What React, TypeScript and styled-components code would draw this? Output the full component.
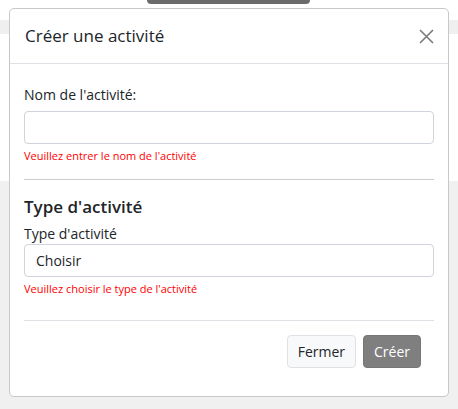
import styled, { createGlobalStyle } from 'styled-components';

const GlobalStyle = createGlobalStyle`
  html, body {
    margin: 0;
    padding: 0;
  }
  body {
    font-family: 'Open Sans', 'Noto Sans', sans-serif;
    color: #212529;
    background: #fff;
  }
  * {
    box-sizing: border-box;
  }
`;

const Page = styled.div`
  position: relative;
  width: 458px;
  height: 409px;
  overflow: hidden;
  display: flex;
  flex-direction: column;
`;

const TopStrip = styled.div`
  height: 20px;
  padding-left: 147px;
`;

const HiddenTab = styled.div`
  width: 163px;
  height: 4px;
  background: #6c6c6c;
  border-radius: 0 0 4px 4px;
`;

const Band = styled.div`
  height: 14px;
  background: #efefef;
`;

const WhiteArea = styled.div`
  height: 147px;
  background: #fff;
`;

const GreyArea = styled.div`
  flex: 1;
  background: #f0f0f0;
`;

const Modal = styled.div`
  position: absolute;
  left: 9px;
  top: 8px;
  width: 440px;
  background: #fff;
  border: 1px solid #c8c8c8;
  border-radius: 5px;
  display: flex;
  flex-direction: column;
`;

const Header = styled.div`
  display: flex;
  align-items: center;
  justify-content: space-between;
  padding: 14px 14px 14px 15px;
  border-bottom: 1px solid #dee2e6;
`;

const Title = styled.h5`
  margin: 0;
  font-size: 17px;
  font-weight: 500;
  line-height: 26px;
`;

const CloseButton = styled.button`
  display: flex;
  padding: 0;
  border: none;
  background: none;
  cursor: pointer;
`;

const Body = styled.div`
  padding: 20px 14px 0;
`;

const Label = styled.label<{ $gap?: number }>`
  display: block;
  font-size: 14px;
  line-height: 21px;
  margin-bottom: ${(p) => p.$gap ?? 6}px;
`;

const Field = styled.div`
  height: 33px;
  border: 1px solid #ced4da;
  border-radius: 4px;
  background: #fff;
  display: flex;
  align-items: center;
  padding: 0 11px;
  font-size: 14px;
`;

const ErrorText = styled.div`
  color: #ff0000;
  font-size: 11px;
  line-height: 16px;
  margin-top: 4px;
`;

const Divider = styled.hr`
  border: none;
  border-top: 1px solid #cccccc;
  margin: 15px 0 16px;
`;

const SectionTitle = styled.h5`
  margin: 0 0 5px;
  font-size: 17px;
  font-weight: 600;
  line-height: 22px;
`;

const Footer = styled.div`
  margin: 23px 14px 0;
  border-top: 1px solid #dee2e6;
  padding: 14px 13px 28px 0;
  display: flex;
  justify-content: flex-end;
  gap: 7px;
`;

const Button = styled.button<{ $primary?: boolean }>`
  height: 33px;
  padding: 0 10px;
  font-family: inherit;
  font-size: 14px;
  border-radius: 4px;
  border: 1px solid ${(p) => (p.$primary ? '#777777' : '#dee2e6')};
  background: ${(p) => (p.$primary ? '#7f7f7f' : '#f8f9fa')};
  color: ${(p) => (p.$primary ? '#fff' : '#212529')};
  cursor: pointer;
`;

export default function App() {
  return (
    <>
      <GlobalStyle />
      <Page>
        <TopStrip>
          <HiddenTab />
        </TopStrip>
        <Band />
        <WhiteArea />
        <GreyArea />
        <Modal>
          <Header>
            <Title>Créer une activité</Title>
            <CloseButton aria-label="Fermer">
              <svg width="15" height="15" viewBox="0 0 15 15">
                <path d="M1 1 L14 14 M14 1 L1 14" stroke="#7a7a7a" strokeWidth="1.6" fill="none" />
              </svg>
            </CloseButton>
          </Header>
          <Body>
            <Label>Nom de l'activité:</Label>
            <Field />
            <ErrorText>Veuillez entrer le nom de l'activité</ErrorText>
            <Divider />
            <SectionTitle>Type d'activité</SectionTitle>
            <Label $gap={0}>Type d'activité</Label>
            <Field>Choisir</Field>
            <ErrorText>Veuillez choisir le type de l'activité</ErrorText>
          </Body>
          <Footer>
            <Button>Fermer</Button>
            <Button $primary>Créer</Button>
          </Footer>
        </Modal>
      </Page>
    </>
  );
}
